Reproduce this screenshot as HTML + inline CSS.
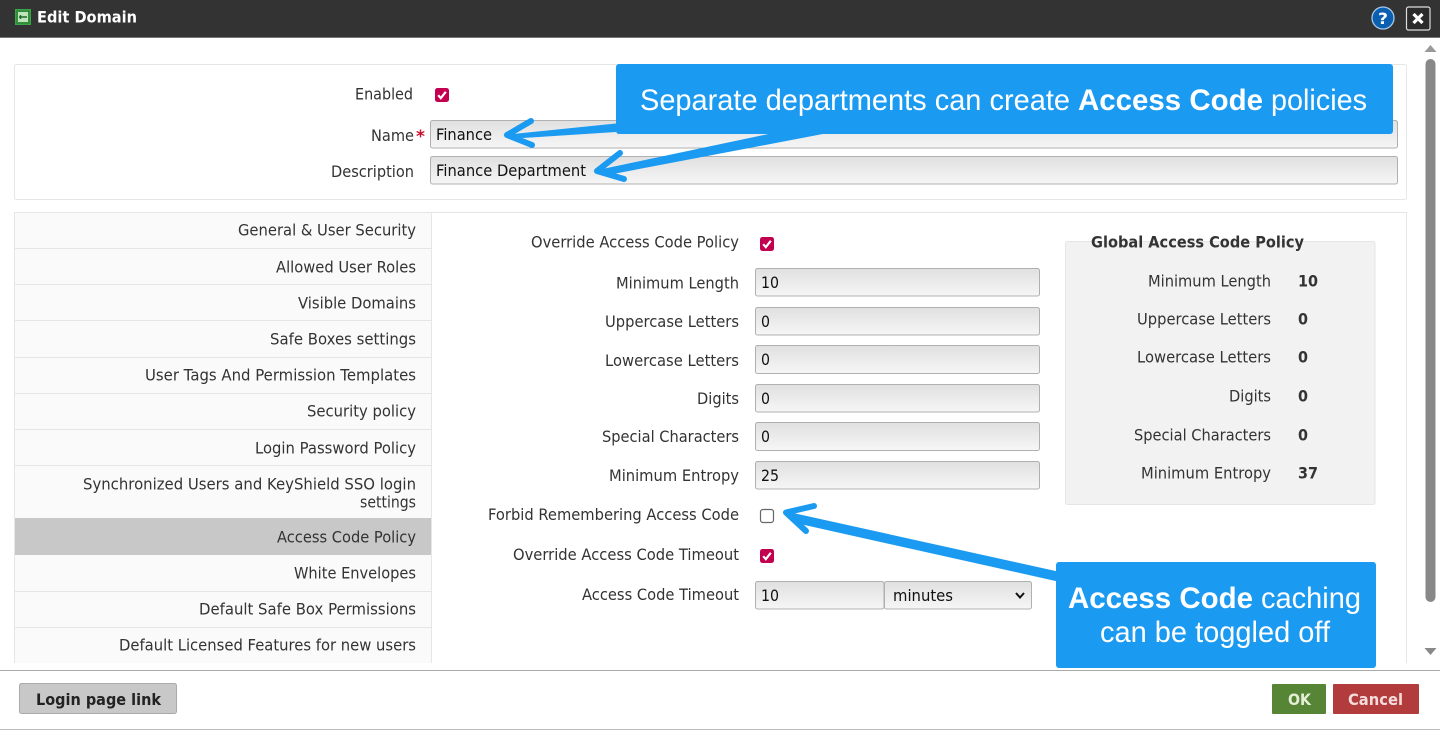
<!DOCTYPE html>
<html><head><meta charset="utf-8"><title>Edit Domain</title>
<style>
html,body{margin:0;padding:0;width:1440px;height:730px;overflow:hidden;background:#fff}
svg{display:block}
text{font-family:"DejaVu Sans","Liberation Sans",sans-serif;font-size:16px;fill:#333}
.i{fill:#111}
.b{font-weight:bold}
.c{font-family:"Liberation Sans",sans-serif;font-size:29.5px;fill:#fff}
</style></head><body>
<svg width="1440" height="730" viewBox="0 0 1440 730" xmlns="http://www.w3.org/2000/svg">
<defs>
<linearGradient id="g" x1="0" y1="0" x2="0" y2="1"><stop offset="0" stop-color="#e0e0e0"/><stop offset="1" stop-color="#f6f6f6"/></linearGradient>
<g id="chk"><rect width="14" height="14" rx="2.5" fill="#c2004f"/><path d="M3.2 7.2l2.6 3 5-6.4" fill="none" stroke="#fff" stroke-width="2.2"/></g>
</defs>
<rect x="0" y="0" width="1440" height="37" fill="#333"/>
<rect x="0" y="37" width="1440" height="1" fill="#777"/>
<rect x="15.500" y="9.500" width="15" height="15" fill="#2f8f3a" stroke="#3fa34a"/>
<rect x="18" y="12" width="10" height="10" fill="#bfe3bb"/>
<path d="M19 17h8M20.500 15v4" stroke="#1f6a28" stroke-width="1.4" fill="none"/>
<text x="37" y="22.500" textLength="100" lengthAdjust="spacingAndGlyphs" class="b" style="fill:#fff">Edit Domain</text>
<circle cx="1383" cy="18" r="11" fill="#0b5fb0" stroke="#a9c8e6" stroke-width="1.3"/>
<text x="1378" y="24" textLength="10" lengthAdjust="spacingAndGlyphs" class="b" style="fill:#fff;font-size:16px">?</text>
<rect x="1406.500" y="7" width="23.500" height="23" rx="2" fill="#2b2b2b" stroke="#ddd" stroke-width="1.2"/>
<path d="M1413.500 14l9 9M1422.500 14l-9 9" stroke="#fff" stroke-width="3.2"/>

<path d="M1424.500 52l6-7 6 7z" fill="#999"/>
<rect x="1425.500" y="59" width="10" height="543" rx="5" fill="#888"/>
<path d="M1424.500 648h12l-6 7z" fill="#888"/>

<rect x="14.500" y="64.500" width="1392" height="135" rx="2" fill="#fff" stroke="#e6e6e6"/>
<text x="355" y="99.500" textLength="58" lengthAdjust="spacingAndGlyphs">Enabled</text>
<use href="#chk" x="435" y="88"/>
<text x="371" y="141" textLength="43" lengthAdjust="spacingAndGlyphs">Name</text>
<text x="416" y="142" textLength="9" lengthAdjust="spacingAndGlyphs" class="b" style="fill:#c8102e;font-size:17px">*</text>
<text x="331" y="177" textLength="83" lengthAdjust="spacingAndGlyphs">Description</text>
<rect x="430.500" y="120.500" width="967" height="27.500" rx="2" fill="url(#g)" stroke="#b0b0b0"/>
<rect x="430.500" y="156.500" width="967" height="27.500" rx="2" fill="url(#g)" stroke="#b0b0b0"/>
<text x="436" y="140" textLength="56" lengthAdjust="spacingAndGlyphs" class="i">Finance</text>
<text x="436" y="176" textLength="150" lengthAdjust="spacingAndGlyphs" class="i">Finance Department</text>

<path d="M14.500 663V212.500H1406.500V663" fill="#fff" stroke="#e6e6e6"/>
<rect x="15" y="213" width="416" height="450" fill="#fafafa"/>
<path d="M431.500 212V663" stroke="#e6e6e6"/>
<path d="M15 248.500H431M15 284.500H431M15 320.500H431M15 357.500H431M15 393.500H431M15 429.500H431M15 465.500H431M15 591.500H431M15 627.500H431" stroke="#e6e6e6"/>
<rect x="15" y="518" width="416" height="37" fill="#c8c8c8"/>
<text x="238" y="235.500" textLength="178" lengthAdjust="spacingAndGlyphs">General &amp; User Security</text>
<text x="276" y="272.500" textLength="140" lengthAdjust="spacingAndGlyphs">Allowed User Roles</text>
<text x="298" y="308.500" textLength="118" lengthAdjust="spacingAndGlyphs">Visible Domains</text>
<text x="270" y="344.500" textLength="146" lengthAdjust="spacingAndGlyphs">Safe Boxes settings</text>
<text x="145" y="380.500" textLength="271" lengthAdjust="spacingAndGlyphs">User Tags And Permission Templates</text>
<text x="307" y="416.500" textLength="109" lengthAdjust="spacingAndGlyphs">Security policy</text>
<text x="255" y="453.500" textLength="161" lengthAdjust="spacingAndGlyphs">Login Password Policy</text>
<text x="83" y="489.500" textLength="333" lengthAdjust="spacingAndGlyphs">Synchronized Users and KeyShield SSO login</text>
<text x="360" y="507.500" textLength="56" lengthAdjust="spacingAndGlyphs">settings</text>
<text x="277" y="542.500" textLength="139" lengthAdjust="spacingAndGlyphs">Access Code Policy</text>
<text x="294" y="578.500" textLength="122" lengthAdjust="spacingAndGlyphs">White Envelopes</text>
<text x="199" y="614.500" textLength="217" lengthAdjust="spacingAndGlyphs">Default Safe Box Permissions</text>
<text x="119" y="650.500" textLength="297" lengthAdjust="spacingAndGlyphs">Default Licensed Features for new users</text>

<text x="531" y="247.500" textLength="208" lengthAdjust="spacingAndGlyphs">Override Access Code Policy</text>
<text x="616" y="288.500" textLength="123" lengthAdjust="spacingAndGlyphs">Minimum Length</text>
<text x="605" y="327" textLength="134" lengthAdjust="spacingAndGlyphs">Uppercase Letters</text>
<text x="605" y="366" textLength="134" lengthAdjust="spacingAndGlyphs">Lowercase Letters</text>
<text x="697" y="404" textLength="42" lengthAdjust="spacingAndGlyphs">Digits</text>
<text x="602" y="442" textLength="137" lengthAdjust="spacingAndGlyphs">Special Characters</text>
<text x="609" y="481" textLength="130" lengthAdjust="spacingAndGlyphs">Minimum Entropy</text>
<text x="488" y="520" textLength="251" lengthAdjust="spacingAndGlyphs">Forbid Remembering Access Code</text>
<text x="513" y="560" textLength="226" lengthAdjust="spacingAndGlyphs">Override Access Code Timeout</text>
<text x="582" y="600" textLength="157" lengthAdjust="spacingAndGlyphs">Access Code Timeout</text>

<use href="#chk" x="760" y="237"/>
<rect x="755.500" y="268.500" width="284" height="27.500" rx="2" fill="url(#g)" stroke="#b0b0b0"/>
<rect x="755.500" y="307.500" width="284" height="27.500" rx="2" fill="url(#g)" stroke="#b0b0b0"/>
<rect x="755.500" y="345.500" width="284" height="28" rx="2" fill="url(#g)" stroke="#b0b0b0"/>
<rect x="755.500" y="384.500" width="284" height="27.500" rx="2" fill="url(#g)" stroke="#b0b0b0"/>
<rect x="755.500" y="422.500" width="284" height="28" rx="2" fill="url(#g)" stroke="#b0b0b0"/>
<rect x="755.500" y="461.500" width="284" height="27.500" rx="2" fill="url(#g)" stroke="#b0b0b0"/>
<text x="761" y="288" textLength="18" lengthAdjust="spacingAndGlyphs" class="i">10</text>
<text x="761" y="327" textLength="9" lengthAdjust="spacingAndGlyphs" class="i">0</text>
<text x="761" y="365" textLength="9" lengthAdjust="spacingAndGlyphs" class="i">0</text>
<text x="761" y="404" textLength="9" lengthAdjust="spacingAndGlyphs" class="i">0</text>
<text x="761" y="442" textLength="9" lengthAdjust="spacingAndGlyphs" class="i">0</text>
<text x="761" y="481" textLength="18" lengthAdjust="spacingAndGlyphs" class="i">25</text>
<rect x="760.500" y="509.500" width="13" height="13" rx="2.500" fill="#fff" stroke="#666" stroke-width="1.200"/>
<use href="#chk" x="760" y="549"/>
<rect x="755.500" y="581.500" width="128.500" height="27.500" rx="2" fill="url(#g)" stroke="#b0b0b0"/>
<rect x="884.500" y="581.500" width="147" height="27.500" rx="2" fill="url(#g)" stroke="#b0b0b0"/>
<text x="761" y="601" textLength="18" lengthAdjust="spacingAndGlyphs" class="i">10</text>
<text x="893" y="601" textLength="60" lengthAdjust="spacingAndGlyphs" class="i">minutes</text>
<path d="M1016 593l4 4.500 4-4.500" fill="none" stroke="#111" stroke-width="2"/>

<rect x="1065.500" y="241.500" width="309.500" height="263" rx="2" fill="#f2f2f2" stroke="#e6e6e6"/>
<text x="1091" y="247.500" textLength="213" lengthAdjust="spacingAndGlyphs" class="b">Global Access Code Policy</text>
<text x="1148" y="286.500" textLength="123" lengthAdjust="spacingAndGlyphs">Minimum Length</text>
<text x="1137" y="324.500" textLength="134" lengthAdjust="spacingAndGlyphs">Uppercase Letters</text>
<text x="1137" y="362.500" textLength="134" lengthAdjust="spacingAndGlyphs">Lowercase Letters</text>
<text x="1229" y="401.500" textLength="42" lengthAdjust="spacingAndGlyphs">Digits</text>
<text x="1134" y="440.500" textLength="137" lengthAdjust="spacingAndGlyphs">Special Characters</text>
<text x="1141" y="478.500" textLength="130" lengthAdjust="spacingAndGlyphs">Minimum Entropy</text>
<text x="1298" y="286.500" textLength="20" lengthAdjust="spacingAndGlyphs" class="b">10</text>
<text x="1298" y="324.500" textLength="10" lengthAdjust="spacingAndGlyphs" class="b">0</text>
<text x="1298" y="362.500" textLength="10" lengthAdjust="spacingAndGlyphs" class="b">0</text>
<text x="1298" y="401.500" textLength="10" lengthAdjust="spacingAndGlyphs" class="b">0</text>
<text x="1298" y="440.500" textLength="10" lengthAdjust="spacingAndGlyphs" class="b">0</text>
<text x="1298" y="478.500" textLength="20" lengthAdjust="spacingAndGlyphs" class="b">37</text>

<rect x="0" y="664" width="1425" height="6" fill="#fff"/>
<rect x="0" y="670" width="1440" height="1" fill="#aaa"/>
<rect x="0" y="729" width="1440" height="1" fill="#bbb"/>
<rect x="19.500" y="683.500" width="157" height="30" rx="2" fill="#c8c8c8" stroke="#aaa"/>
<text x="36" y="705" textLength="125" lengthAdjust="spacingAndGlyphs" class="b" style="fill:#222">Login page link</text>
<rect x="1272" y="684" width="54" height="30" rx="1" fill="#568536"/>
<text x="1288" y="705" textLength="23" lengthAdjust="spacingAndGlyphs" class="b" style="fill:#e4efd8">OK</text>
<rect x="1333" y="684" width="86" height="30" rx="1" fill="#b23c3c"/>
<text x="1348" y="705" textLength="55" lengthAdjust="spacingAndGlyphs" class="b" style="fill:#f5dcdc">Cancel</text>

<g fill="none" stroke="#1b9af2" stroke-linecap="round" stroke-linejoin="round" stroke-width="6">
<path d="M531 121L507 135L532 145"/>
<path d="M620 153L597 171L624 179"/>
<path d="M814 506L786 512.500L806 531"/>
</g>
<path d="M503 135L616 123.500V132L523 138Z" fill="#1b9af2"/>
<path d="M593 171L773 133H828L613 174Z" fill="#1b9af2"/>
<path d="M784 511L1060 572V582L800 524Z" fill="#1b9af2"/>

<rect x="616" y="64" width="777" height="70" rx="3" fill="#1b9af2"/>
<text x="640" y="110" textLength="430" lengthAdjust="spacingAndGlyphs" class="c">Separate departments can create</text>
<text x="1078" y="110" textLength="185" lengthAdjust="spacingAndGlyphs" class="c b">Access Code</text>
<text x="1271" y="110" textLength="96" lengthAdjust="spacingAndGlyphs" class="c">policies</text>
<rect x="1056" y="562" width="320" height="106" rx="3" fill="#1b9af2"/>
<text x="1068" y="608" textLength="185" lengthAdjust="spacingAndGlyphs" class="c b">Access Code</text>
<text x="1261" y="608" textLength="100" lengthAdjust="spacingAndGlyphs" class="c">caching</text>
<text x="1100" y="642" textLength="230" lengthAdjust="spacingAndGlyphs" class="c">can be toggled off</text>
</svg>
</body></html>
